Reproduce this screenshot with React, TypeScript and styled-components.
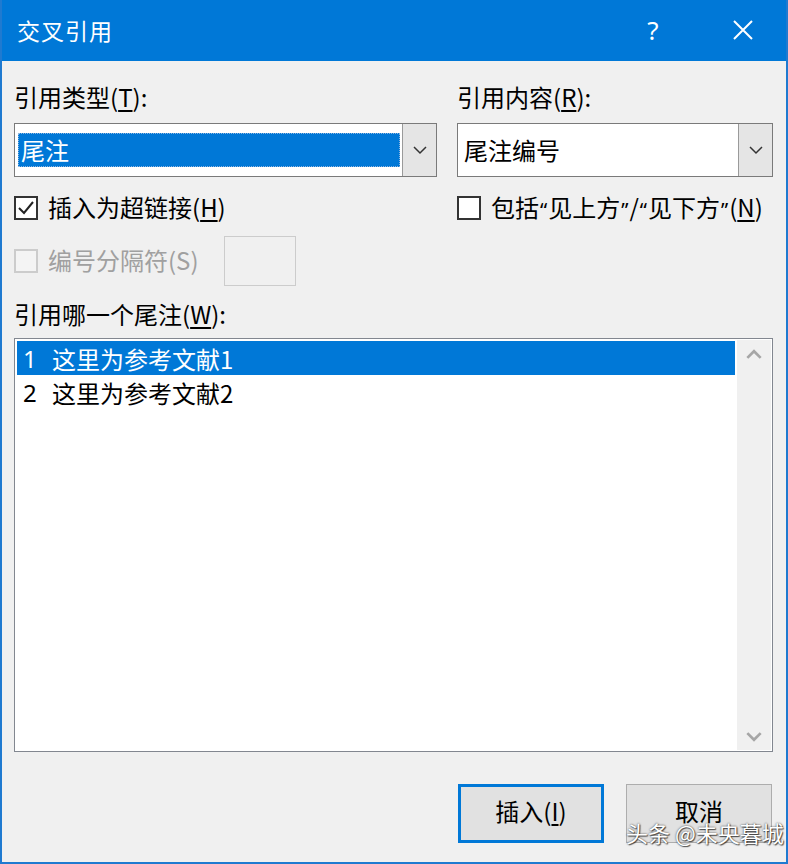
import React from "react";
import styled, { createGlobalStyle } from "styled-components";

const GlobalStyle = createGlobalStyle`
  html, body { margin: 0; padding: 0; background: #f0f0f0; }
  * { box-sizing: border-box; }
`;

const FONT = `"Noto Sans CJK SC", "Noto Sans", "Liberation Sans", sans-serif`;

const Dialog = styled.div`
  position: relative;
  width: 788px;
  height: 864px;
  display: flex;
  flex-direction: column;
  background: #f0f0f0;
  border: 2px solid #1f7ad0;
  border-top: none;
  font-family: ${FONT};
  font-size: 24px;
  color: #000;
  overflow: hidden;
`;

const TitleBar = styled.div`
  height: 61px;
  margin: 0 -2px;
  background: #0078d7;
  color: #fff;
  display: flex;
  align-items: center;
  padding-left: 17px;
  padding-bottom: 2px;
  font-size: 23px;
  flex-shrink: 0;
`;

const TitleText = styled.div`
  flex: 1;
  letter-spacing: 1px;
`;

const TitleButton = styled.div`
  width: 90px;
  height: 59px;
  display: flex;
  align-items: center;
  justify-content: center;
  font-size: 26px;
  font-family: "Noto Sans", sans-serif;
`;

const Body = styled.div`
  flex: 1;
  display: flex;
  flex-direction: column;
  padding: 0 13px 0 12px;
`;

const TopGrid = styled.div`
  display: grid;
  grid-template-columns: 423px 316px;
  column-gap: 20px;
`;

const Column = styled.div`
  display: flex;
  flex-direction: column;
`;

const Label = styled.div<{ $mt?: number }>`
  height: 34px;
  line-height: 31px;
  padding-bottom: 3px;
  margin-top: ${(p) => p.$mt ?? 0}px;
  white-space: nowrap;
  u { text-decoration-thickness: 2px; text-underline-offset: 3px; }
`;

const Combo = styled.div`
  margin-top: 8px;
  height: 54px;
  border: 1px solid #7a7a7a;
  background: #fff;
  display: flex;
  align-items: stretch;
`;

const ComboValue = styled.div<{ $selected?: boolean }>`
  flex: 1;
  margin: ${(p) => (p.$selected ? "9px 2px 9px 3px" : "0")};
  padding-left: ${(p) => (p.$selected ? "3px" : "6px")};
  padding-bottom: 2px;
  display: flex;
  align-items: center;
  background: ${(p) => (p.$selected ? "#0078d7" : "transparent")};
  color: ${(p) => (p.$selected ? "#fff" : "#000")};
  outline: ${(p) => (p.$selected ? "1px dotted #8fb6e0" : "none")};
  outline-offset: -1px;
`;

const ComboButton = styled.div`
  width: 34px;
  background: #e5e5e5;
  border-left: 1px solid #9a9a9a;
  display: flex;
  align-items: center;
  justify-content: center;
`;

const CheckRow = styled.div<{ $mt?: number; $h?: number; $disabled?: boolean }>`
  margin-top: ${(p) => p.$mt ?? 0}px;
  height: ${(p) => p.$h ?? 32}px;
  display: flex;
  align-items: center;
  color: ${(p) => (p.$disabled ? "#a0a0a0" : "#000")};
  white-space: nowrap;
  u { text-decoration-thickness: 2px; text-underline-offset: 3px; }
`;

const RowText = styled.span`
  position: relative;
  top: -2px;
`;

const Quote = styled.span`
  font-family: "Noto Sans", sans-serif;
  font-size: 20px;
  margin: 0 1px;
`;

const CheckBox = styled.div<{ $disabled?: boolean }>`
  width: 24px;
  height: 24px;
  border: 2px solid ${(p) => (p.$disabled ? "#cccccc" : "#333")};
  background: ${(p) => (p.$disabled ? "#f4f4f4" : "#fff")};
  margin-right: 10px;
  display: flex;
  align-items: center;
  justify-content: center;
  flex-shrink: 0;
`;

const SmallInput = styled.div`
  width: 72px;
  height: 50px;
  margin-left: 25px;
  border: 1px solid #cccccc;
  background: #f0f0f0;
`;

const ListBox = styled.div`
  margin-top: 6px;
  height: 414px;
  border: 1px solid #828790;
  background: #fff;
  display: flex;
  padding: 2px;
`;

const ListItems = styled.div`
  flex: 1;
  display: flex;
  flex-direction: column;
`;

const ListItem = styled.div<{ $selected?: boolean }>`
  height: 34px;
  display: flex;
  align-items: center;
  padding-left: 6px;
  background: ${(p) => (p.$selected ? "#0078d7" : "transparent")};
  color: ${(p) => (p.$selected ? "#fff" : "#000")};
`;

const ItemNum = styled.span`
  width: 29px;
  font-family: "Noto Sans", sans-serif;
`;

const ScrollBar = styled.div`
  width: 34px;
  margin: -1px -1px -1px 2px;
  background: #f0f0f0;
  display: flex;
  flex-direction: column;
  justify-content: space-between;
  align-items: center;
  padding: 9px 0 8px;
`;

const ButtonRow = styled.div`
  margin-top: 32px;
  display: flex;
  justify-content: flex-end;
  gap: 22px;
  padding-right: 1px;
`;

const Button = styled.div<{ $default?: boolean }>`
  width: 146px;
  height: 59px;
  background: #e1e1e1;
  border: ${(p) => (p.$default ? "3px solid #0078d7" : "1px solid #adadad")};
  display: flex;
  align-items: center;
  justify-content: center;
  padding-bottom: 6px;
  u { text-decoration-thickness: 2px; text-underline-offset: 3px; }
`;

const Watermark = styled.div`
  position: absolute;
  left: 624px;
  top: 816px;
  color: #fff;
  font-size: 22px;
  white-space: nowrap;
  text-shadow: 0 0 2px rgba(0,0,0,0.8), 1px 1px 1px rgba(0,0,0,0.6);
`;

const Chevron = ({ up, color = "#333", size = 14 }: { up?: boolean; color?: string; size?: number }) => (
  <svg width={size} height={size / 2 + 2} viewBox="0 0 14 9">
    <path
      d={up ? "M1 8 L7 2 L13 8" : "M1 1 L7 7 L13 1"}
      fill="none"
      stroke={color}
      strokeWidth={up || color !== "#333" ? 2.4 : 1.5}
    />
  </svg>
);

const CheckMark = () => (
  <svg width="18" height="16" viewBox="0 0 18 16">
    <path d="M2 8 L7 13 L16 2" fill="none" stroke="#222" strokeWidth="2" />
  </svg>
);

const CloseIcon = () => (
  <svg width="22" height="22" viewBox="0 0 22 22">
    <path d="M2 2 L20 20 M20 2 L2 20" stroke="#fff" strokeWidth="2" />
  </svg>
);

export default function App() {
  return (
    <>
      <GlobalStyle />
      <Dialog>
        <TitleBar>
          <TitleText>交叉引用</TitleText>
          <TitleButton>?</TitleButton>
          <TitleButton>
            <CloseIcon />
          </TitleButton>
        </TitleBar>
        <Body>
          <TopGrid>
            <Column>
              <Label $mt={20}>
                引用类型(<u>T</u>):
              </Label>
              <Combo>
                <ComboValue $selected>尾注</ComboValue>
                <ComboButton>
                  <Chevron />
                </ComboButton>
              </Combo>
              <CheckRow $mt={15}>
                <CheckBox>
                  <CheckMark />
                </CheckBox>
                <RowText>
                  插入为超链接(<u>H</u>)
                </RowText>
              </CheckRow>
              <CheckRow $mt={12} $h={50} $disabled>
                <CheckBox $disabled />
                <RowText>编号分隔符(S)</RowText>
                <SmallInput />
              </CheckRow>
            </Column>
            <Column>
              <Label $mt={20}>
                引用内容(<u>R</u>):
              </Label>
              <Combo>
                <ComboValue>尾注编号</ComboValue>
                <ComboButton>
                  <Chevron />
                </ComboButton>
              </Combo>
              <CheckRow $mt={15}>
                <CheckBox />
                <RowText>
                  包括<Quote>“</Quote>见上方<Quote>”</Quote>/<Quote>“</Quote>见下方<Quote>”</Quote>(<u>N</u>)
                </RowText>
              </CheckRow>
            </Column>
          </TopGrid>
          <Label $mt={12}>
            引用哪一个尾注(<u>W</u>):
          </Label>
          <ListBox>
            <ListItems>
              <ListItem $selected>
                <ItemNum>1</ItemNum>这里为参考文献1
              </ListItem>
              <ListItem>
                <ItemNum>2</ItemNum>这里为参考文献2
              </ListItem>
            </ListItems>
            <ScrollBar>
              <Chevron up color="#a6a6a6" size={16} />
              <Chevron color="#a6a6a6" size={16} />
            </ScrollBar>
          </ListBox>
          <ButtonRow>
            <Button $default>
              插入(<u>I</u>)
            </Button>
            <Button>取消</Button>
          </ButtonRow>
        </Body>
        <Watermark>头条 @未央暮城</Watermark>
      </Dialog>
    </>
  );
}
